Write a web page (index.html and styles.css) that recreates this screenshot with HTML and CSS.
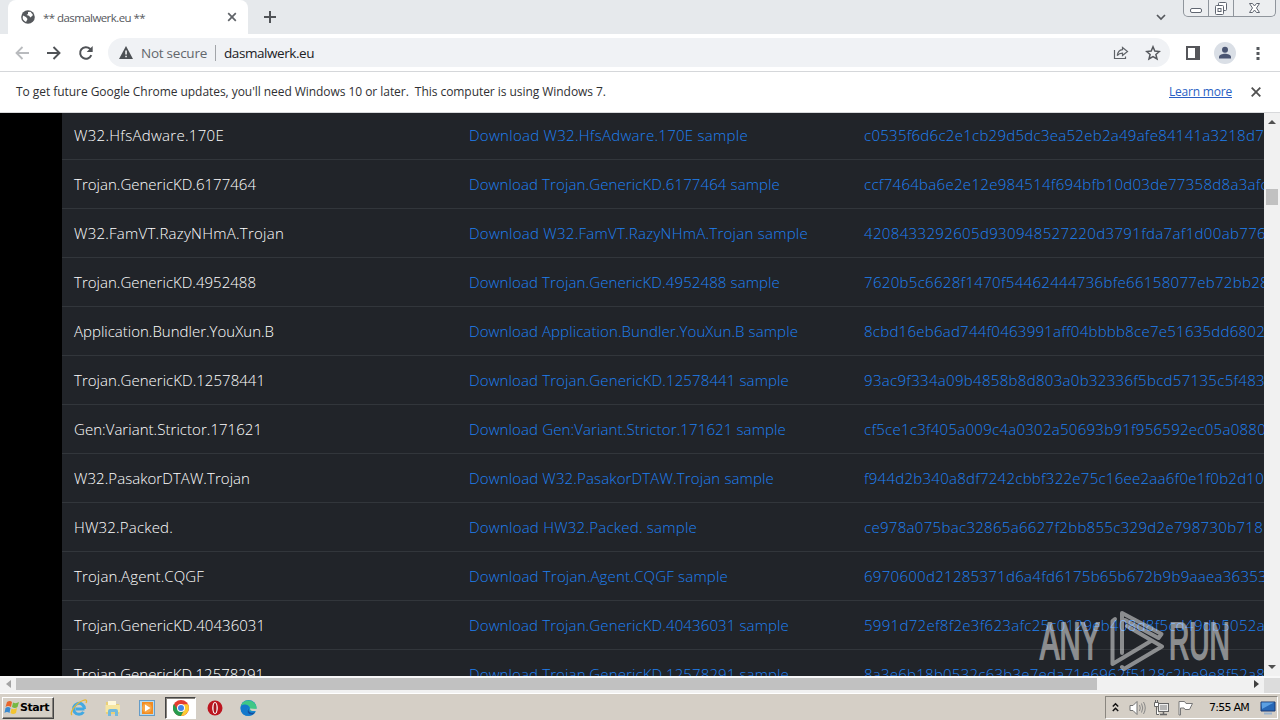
FILE: index.html
```html
<!DOCTYPE html>
<html lang="en">
<head>
<meta charset="utf-8">
<title>** dasmalwerk.eu **</title>
<link rel="stylesheet" href="styles.css">
</head>
<body>
<div class="screen">
  <header class="tabstrip">
    <div class="tab">
      <svg class="globe" width="14" height="14" viewBox="0 0 14 14"><circle cx="7" cy="7" r="6.8" fill="#55585c"/><path d="M2 5.5 L5 7 L6.5 9 L5 12 A5.5 5.5 0 0 1 2 5.500M7 2 L9.500 1.800 L12 5 L9.500 7.500 L8 5.800 L5.500 5 L7 4Z" fill="#fff"/></svg>
      <span class="tab-title" data-w="102">** dasmalwerk.eu **</span>
      <svg class="tab-close" width="10" height="10" viewBox="0 0 10 10"><path d="M1.200 1.200 L8.800 8.800 M8.800 1.200 L1.200 8.800" stroke="#5f6368" stroke-width="1.700"/></svg>
    </div>
    <svg class="newtab" width="12" height="12" viewBox="0 0 12 12"><path d="M6 0 V12 M0 6 H12" stroke="#505357" stroke-width="2"/></svg>
    <div class="spacer"></div>
    <svg class="tabsearch" width="10" height="7" viewBox="0 0 10 7"><path d="M1 1 L5 5 L9 1" fill="none" stroke="#55585d" stroke-width="1.700"/></svg>
    <div class="winbtns">
      <div class="wb w1"><svg width="14" height="16" viewBox="0 0 14 16"><rect x="1.500" y="8.500" width="11" height="4" rx="1.500" fill="#fff" stroke="#606671"/></svg></div>
      <div class="wb w2"><svg width="14" height="16" viewBox="0 0 14 16"><rect x="4.500" y="2.500" width="8" height="8" rx="1" fill="#fff" stroke="#606671"/><rect x="1.500" y="5.500" width="8" height="9" rx="1" fill="#fff" stroke="#606671"/><rect x="4" y="8.500" width="3" height="3" fill="#fff" stroke="#606671"/></svg></div>
      <div class="wb w3"><svg width="13" height="16" viewBox="0 0 13 16"><path d="M1.500 3.500 H4.500 L6.500 6 L8.500 3.500 H11.500 L8.500 8 L11.500 12.500 H8.500 L6.500 10 L4.500 12.500 H1.500 L4.500 8Z" fill="#fff" stroke="#606671"/></svg></div>
    </div>
  </header>

  <div class="toolbar">
    <svg class="back" width="14" height="14" viewBox="0 0 14 14"><path d="M14 7 H1.500 M7.500 1 L1.500 7 L7.500 13" fill="none" stroke="#b9bbbe" stroke-width="1.800"/></svg>
    <svg class="fwd" width="14" height="14" viewBox="0 0 14 14"><path d="M0 7 H12.500 M6.500 1 L12.500 7 L6.500 13" fill="none" stroke="#505357" stroke-width="1.900"/></svg>
    <svg class="reload" width="16" height="16" viewBox="0 0 16 16"><path d="M13.300 10.200 A5.800 5.800 0 1 1 12 3.800 L13.500 5.300" fill="none" stroke="#505357" stroke-width="2"/><path d="M14.700 1 V7 H8.700Z" fill="#505357"/></svg>
    <div class="omnibox">
      <svg class="warn" width="14" height="13" viewBox="0 0 14 13"><path d="M7 0 L14 13 H0Z" fill="#4d5155"/><path d="M6.300 4.500 h1.500 v4 h-1.500z M6.300 9.700 h1.500 v1.500 h-1.500z" fill="#fff"/></svg>
      <span class="notsecure" data-w="66">Not secure</span>
      <span class="divider"></span>
      <span class="url" data-w="90">dasmalwerk.eu</span>
      <div class="spacer"></div>
      <svg class="share" width="16" height="14" viewBox="0 0 16 14"><path d="M1.500 4 V12.500 H12.500 V10.500 M9.500 1.500 L14.500 5.500 L9.500 9.500 V7.200 C7 7.200 5.500 8 4.200 9.700 C4.700 6.500 6 4 9.500 3.700Z" fill="none" stroke="#5f6368" stroke-width="1.200"/></svg>
      <svg class="star" width="16" height="16" viewBox="0 0 16 16"><path d="M8 1.800 L9.800 6.100 L14.400 6.500 L10.900 9.500 L12 14 L8 11.600 L4 14 L5.100 9.500 L1.600 6.500 L6.200 6.100Z" fill="none" stroke="#55585d" stroke-width="1.500"/></svg>
    </div>
    <svg class="panel" width="14" height="14" viewBox="0 0 14 14"><path d="M0 0 H14 V14 H0Z M2 2 V12 H9 V2Z" fill="#55565a" fill-rule="evenodd"/></svg>
    <svg class="avatar" width="22" height="22" viewBox="0 0 22 22"><circle cx="11" cy="11" r="11" fill="#dadfe6"/><circle cx="11" cy="7.800" r="3" fill="#4a5572"/><path d="M5 16.500 V15 C5 12.800 8.500 11.800 11 11.800 S17 12.800 17 15 V16.500Z" fill="#4a5572"/></svg>
    <svg class="dots" width="4" height="14" viewBox="0 0 4 14"><path d="M.5 1h3v3h-3zM.5 6h3v3h-3zM.5 11h3v3h-3z" fill="#55585d"/></svg>
  </div>

  <div class="infobar">
    <span class="info" data-w="590">To get future Google Chrome updates, you'll need Windows 10 or later.&nbsp; This computer is using Windows 7.</span>
    <div class="spacer"></div>
    <a class="learn" data-w="63">Learn more</a>
    <svg class="info-close" width="10" height="10" viewBox="0 0 10 10"><path d="M.7.7 L9.300 9.300 M9.300.7 L.7 9.300" stroke="#505050" stroke-width="1.800"/></svg>
  </div>

  <main class="viewport">
    <div class="page">
      <div class="table">
        <div class="row"><span class="name" data-w="150">W32.HfsAdware.170E</span><a data-w="279">Download W32.HfsAdware.170E sample</a><a data-w="400">c0535f6d6c2e1cb29d5dc3ea52eb2a49afe84141a3218d7</a></div>
        <div class="row"><span class="name" data-w="182">Trojan.GenericKD.6177464</span><a data-w="311">Download Trojan.GenericKD.6177464 sample</a><a data-w="404">ccf7464ba6e2e12e984514f694bfb10d03de77358d8a3afc</a></div>
        <div class="row"><span class="name" data-w="210">W32.FamVT.RazyNHmA.Trojan</span><a data-w="339">Download W32.FamVT.RazyNHmA.Trojan sample</a><a data-w="402">4208433292605d930948527220d3791fda7af1d00ab776</a></div>
        <div class="row"><span class="name" data-w="182">Trojan.GenericKD.4952488</span><a data-w="311">Download Trojan.GenericKD.4952488 sample</a><a data-w="405">7620b5c6628f1470f54462444736bfe66158077eb72bb28</a></div>
        <div class="row"><span class="name" data-w="200">Application.Bundler.YouXun.B</span><a data-w="329">Download Application.Bundler.YouXun.B sample</a><a data-w="401">8cbd16eb6ad744f0463991aff04bbbb8ce7e51635dd6802</a></div>
        <div class="row"><span class="name" data-w="191">Trojan.GenericKD.12578441</span><a data-w="320">Download Trojan.GenericKD.12578441 sample</a><a data-w="401">93ac9f334a09b4858b8d803a0b32336f5bcd57135c5f483</a></div>
        <div class="row"><span class="name" data-w="188">Gen:Variant.Strictor.171621</span><a data-w="317">Download Gen:Variant.Strictor.171621 sample</a><a data-w="402">cf5ce1c3f405a009c4a0302a50693b91f956592ec05a0880</a></div>
        <div class="row"><span class="name" data-w="176">W32.PasakorDTAW.Trojan</span><a data-w="305">Download W32.PasakorDTAW.Trojan sample</a><a data-w="400">f944d2b340a8df7242cbbf322e75c16ee2aa6f0e1f0b2d10</a></div>
        <div class="row"><span class="name" data-w="99">HW32.Packed.</span><a data-w="228">Download HW32.Packed. sample</a><a data-w="399">ce978a075bac32865a6627f2bb855c329d2e798730b718</a></div>
        <div class="row"><span class="name" data-w="130">Trojan.Agent.CQGF</span><a data-w="259">Download Trojan.Agent.CQGF sample</a><a data-w="403">6970600d21285371d6a4fd6175b65b672b9b9aaea36353</a></div>
        <div class="row"><span class="name" data-w="191">Trojan.GenericKD.40436031</span><a data-w="320">Download Trojan.GenericKD.40436031 sample</a><a data-w="401">5991d72ef8f2e3f623afc25c0129eb408d8f5cd49db5052a</a></div>
        <div class="row"><span class="name" data-w="190">Trojan.GenericKD.12578291</span><a data-w="320">Download Trojan.GenericKD.12578291 sample</a><a data-w="401">8a3e6b18b0532c63b3e7eda71e6962f5128c2be9e8f52a8</a></div>
      </div>
    </div>
    <div class="vscroll">
      <svg class="up" width="8" height="4" viewBox="0 0 8 4"><path d="M0 4 L4 0 L8 4Z" fill="#505050"/></svg>
      <div class="vthumb"></div>
      <div class="spacer"></div>
      <svg class="down" width="8" height="4" viewBox="0 0 8 4"><path d="M0 0 H8 L4 4Z" fill="#505050"/></svg>
    </div>
    <div class="watermark">
      <span class="wm any"><b>ANY</b></span>
      <svg class="play" width="56" height="62" viewBox="0 0 56 62"><g fill="none" stroke="#fff" stroke-width="4" stroke-linecap="round" stroke-linejoin="round"><path d="M12 43 V3 L51.500 24 L48.500 28 L15 10"/><path d="M41 31 L2.500 54 V11 L5 9"/><path d="M17 16 L52 36.500 L14 59 L12 57"/></g></svg>
      <span class="wm run"><b>RUN</b></span>
    </div>
  </main>
  <div class="hscroll">
    <svg class="left" width="5" height="8" viewBox="0 0 5 8"><path d="M5 0 V8 L0 4Z" fill="#a3a3a3"/></svg>
    <div class="hthumb"></div>
    <div class="spacer"></div>
    <svg class="right" width="5" height="8" viewBox="0 0 5 8"><path d="M0 0 V8 L5 4Z" fill="#404040"/></svg>
    <div class="corner"></div>
  </div>

  <footer class="taskbar">
    <div class="start">
      <svg width="16" height="15" viewBox="0 0 16 15"><path d="M3 2 Q6 0 8 2 L7 7 Q4 5 1.500 7Z" fill="#e8662c"/><path d="M9 2.500 Q12 4 15 2 L13.500 7 Q11 9 8 7Z" fill="#76b843"/><path d="M1.500 8 Q4 6 6.500 8 L5.500 13 Q3 11 .5 13Z" fill="#3a8ad0"/><path d="M7.500 8.500 Q10 10 13 8 L12 13 Q9 15 6.500 13Z" fill="#f3c431"/></svg>
      <span data-w="29">Start</span>
    </div>
    <div class="quick ie"><svg width="18" height="18" viewBox="0 0 18 18"><path d="M14.500 10 H5.500 M14.500 10 A5.500 5.500 0 1 0 13.500 13" fill="none" stroke="#43a9e2" stroke-width="3"/><path d="M2 16 C-1 14 6 4 13 1.500 C17 0 17 2 16 4" fill="none" stroke="#e7b735" stroke-width="1.300"/></svg></div>
    <div class="quick"><svg width="18" height="18" viewBox="0 0 18 18"><path d="M2 3 H7 L8.500 5 H15 V15 H2Z" fill="#ead078"/><path d="M4 2 H12 V7 H4Z" fill="#fff9dc"/><path d="M1.500 6 H16 V13 H1.500Z" fill="#f6e6a2"/><path d="M4 17 V12 Q4 10 6 10 H12 Q14 10 14 12 V17 H11 V13 H7 V17Z" fill="#73badd"/></svg></div>
    <div class="quick"><svg width="18" height="18" viewBox="0 0 18 18"><rect x="1.500" y="1.500" width="15" height="15" fill="#b8daee" stroke="#659cc7"/><rect x="4" y="3" width="11" height="12" fill="#f28c22"/><circle cx="9" cy="9" r="4.800" fill="#f7a646"/><path d="M7 5.500 L12.500 9 L7 12.500Z" fill="#fff"/></svg></div>
    <div class="quick active"><svg width="16" height="16" viewBox="0 0 16 16"><circle cx="8" cy="8" r="8" fill="#e43d30"/><path d="M1 4 A8 8 0 0 0 8 16 L11.500 9.500 L8 11.500 L4.500 9.500Z" fill="#279c4e"/><path d="M15 4.300 A8 8 0 0 1 8 16 L11.500 9.500 L10.500 4.300Z" fill="#fccb31"/><circle cx="8" cy="8" r="4" fill="#fff"/><circle cx="8" cy="8" r="3" fill="#4285e8"/></svg></div>
    <div class="quick"><svg width="16" height="16" viewBox="0 0 16 16"><ellipse cx="8" cy="8" rx="7.500" ry="7.500" fill="#bd1620"/><ellipse cx="8" cy="8" rx="2.800" ry="6" fill="#fff"/><ellipse cx="8" cy="8" rx="1.500" ry="5" fill="#a9141d"/></svg></div>
    <div class="quick"><svg width="17" height="16" viewBox="0 0 17 16"><circle cx="8.500" cy="8" r="8" fill="#168bd2"/><path d="M1 6 C3-2 16-1 16.500 7.500 C16.500 11 12 12 9.500 10 C12 7 7 3 1 6Z" fill="#40c786"/><path d="M1 6 C5 3 9 5 9 7.500 C5 9 7 14 13 14 C6 19-1 13 1 6Z" fill="#1479cc"/><path d="M9 8 C7 12 12 14 15.500 12 L13 14.500 C8 15 6 11 9 8Z" fill="#164f9d"/><path d="M10 8.500 Q10 11.500 16 11 L17 13 V9Z" fill="#d5cfc6"/></svg></div>
    <div class="spacer"></div>
    <div class="tray">
      <svg class="chev" width="7" height="11" viewBox="0 0 7 11"><path d="M.8 4.500 L3.500 1.800 L6.200 4.500 M.8 9 L3.500 6.300 L6.200 9" fill="none" stroke="#111" stroke-width="1.500"/></svg>
      <svg class="vol" width="17" height="16" viewBox="0 0 17 16"><path d="M1 5.500 H4 L8 1.500 V14.500 L4 10.500 H1Z" fill="#fff" stroke="#737373"/><path d="M10.500 5 Q12 8 10.500 11 M12.500 3.500 Q15 8 12.500 12.500 M14.500 2 Q18 8 14.500 14" fill="none" stroke="#888"/></svg>
      <svg class="net" width="17" height="16" viewBox="0 0 17 16"><rect x="5.500" y="3.500" width="10" height="8" fill="#b5b5b5" stroke="#666"/><rect x="6.500" y="4.500" width="8" height="6" fill="none" stroke="#eee"/><path d="M7 14.500 H14 M10.500 12 V14" stroke="#666" stroke-width="1.500"/><path d="M1.500 2.500 H5.500 V6.500 H1.500Z M3.500 6.500 V14.500 H6" fill="#fff" stroke="#666"/><path d="M2.500 0 V2 M4.500 0 V2" stroke="#666"/></svg>
      <svg class="flag" width="17" height="16" viewBox="0 0 17 16"><path d="M2 1.500 H7.500 L9 3.500 H15.500 L12.500 9.500 H8 L7 8 H3.500 V15 H2Z" fill="#fff" stroke="#777"/></svg>
      <span class="clock" data-w="40">7:55 AM</span>
      <svg class="desktop" width="16" height="14" viewBox="0 0 16 14"><path d="M1 1 H15 V10 H1Z" fill="#2767b6" stroke="#1d3a72"/><path d="M1.500 1.500 H14 L2 8Z" fill="#5b9fe2"/><path d="M4 12.500 H12" stroke="#9ab2cc" stroke-width="2"/></svg>
    </div>
  </footer>
</div>
<script src="fit.js"></script>
</body>
</html>
```
FILE: styles.css
```css
* { box-sizing: border-box; }
body { margin: 0; font-family: "Open Sans", "Noto Sans", sans-serif; overflow: hidden; }
svg { display: block; flex: none; }
[data-w] { white-space: pre; flex: none; }
.screen { width: 1280px; height: 720px; display: flex; flex-direction: column; overflow: hidden; background: #fff; }
.spacer { flex: 1; }

.tabstrip { height: 34px; display: flex; background: #e6e9ec; padding-left: 8px; flex: none; }
.tab { width: 240px; height: 34px; background: #fff; border-radius: 8px 8px 0 0; display: flex; align-items: center; padding: 0 11px 0 13px; }
.tab-title { font-size: 11.5px; color: #55585d; margin-left: 8px; flex: 1; }
.newtab { margin: 11px 0 0 16px; }
.tabsearch { margin: 14px 17px 0 0; }
.winbtns { display: flex; width: 93px; height: 17px; border: 1px solid #8f959c; border-top: 0; border-radius: 0 0 5px 5px; margin-right: 4px; background: #eceef0; }
.wb { display: flex; justify-content: center; border-right: 1px solid #8f959c; }
.w1 { width: 25px; }
.w2 { width: 25px; }
.w3 { flex: 1; border: 0; }

.toolbar { height: 38px; border-bottom: 1px solid #d5d7da; display: flex; align-items: center; padding: 0 20px 0 15px; flex: none; }
.fwd { margin-left: 18px; }
.reload { margin-left: 17px; }
.omnibox { width: 1064px; height: 29px; margin-left: 14px; border-radius: 15px; background: #f0f2f5; display: flex; align-items: center; padding: 0 9px 0 11px; }
.notsecure { font-size: 13.5px; color: #63676c; margin-left: 8px; }
.divider { width: 1px; height: 16px; background: #a2a5a9; margin: 0 8px; }
.url { font-size: 13.5px; color: #202124; }
.star { margin-left: 16px; }
.panel { margin-left: 16px; }
.avatar { margin-left: 14px; }
.dots { margin-left: 20px; }

.infobar { height: 41px; display: flex; align-items: center; padding: 0 19px 1px 16px; border-bottom: 1px solid #d8d9db; flex: none; }
.info { font-size: 12px; color: #2f3033; }
.learn { font-size: 12px; color: #2a5fc4; text-decoration: underline; }
.info-close { margin-left: 19px; }

.viewport { height: 563px; display: flex; position: relative; overflow: hidden; flex: none; }
.page { width: 1264px; background: #000; padding-left: 62px; overflow: hidden; }
.table { margin-top: -2px; background: #212429; }
.row { height: 49px; border-bottom: 1px solid #32363b; display: grid; grid-template-columns: 395px 395px 1fr; padding-left: 12px; align-items: center; font: 300 15px/23px "Open Sans", "Noto Sans", sans-serif; color: #1f80f2; }
.row .name { color: #fff; }
.row > * { justify-self: start; }
.vscroll { width: 16px; background: #f1f1f1; display: flex; flex-direction: column; align-items: center; }
.up { margin-top: 7px; }
.vthumb { width: 12px; height: 16px; background: #c1c1c1; margin-top: 65px; }
.down { margin-bottom: 7px; }

.watermark { position: absolute; left: 1040px; top: 497px; width: 196px; height: 62px; opacity: .48; display: flex; color: #fff; }
.wm { display: block; height: 62px; font: 400 51px/62px "Liberation Sans", sans-serif; }
.wm b { display: block; font-weight: 400; transform-origin: 0 50%; padding-top: 1px; -webkit-text-stroke: 2px #fff; }
.any { width: 70px; }
.any b { width: 110px; transform: scaleX(.57); }
.run { width: 64px; margin-left: 3px; }
.run b { width: 110px; transform: scaleX(.55); }

.hscroll { height: 17px; background: #f1f1f1; display: flex; align-items: center; flex: none; border-top: 2px solid #f8f8f8; }
.left { margin: 0 5px 0 6px; }
.hthumb { width: 1081px; height: 12px; background: #c1c1c1; margin-bottom: 3px; }
.left, .right { margin-bottom: 3px; }
.right { margin-right: 5px; }
.corner { width: 16px; height: 15px; background: #dcdcdc; }

.taskbar { height: 27px; background: #d5cfc6; border-top: 1px solid #fff; display: flex; padding: 2px 2px 1px; align-items: center; flex: none; }
.start { width: 52px; height: 22px; border: 1px solid; border-color: #fff #444 #444 #fff; box-shadow: inset -1px -1px #86827c; display: flex; align-items: center; gap: 0; padding-left: 1px; font: 700 11px/20px "DejaVu Sans", sans-serif; color: #000; }
.quick { width: 31px; height: 22px; margin-right: 3px; display: flex; align-items: center; justify-content: center; }
.ie { margin-left: 9px; }
.active { background: #fff; border: 1px solid; border-color: #444 #fff #fff #444; box-shadow: inset 1px 1px #86827c; }
.tray { width: 173px; height: 23px; border: 1px solid; border-color: #8a867f #fff #fff #8a867f; display: flex; align-items: center; padding-left: 6px; }
.vol { margin-left: 10px; }
.net { margin-left: 7px; }
.flag { margin-left: 7px; }
.clock { font: 11px/20px "DejaVu Sans", sans-serif; margin-left: 15px; color: #000; }
.desktop { margin-left: 11px; }
```
FILE: fit.js
```javascript
document.querySelectorAll("[data-w]").forEach(function (el) {
  var range = document.createRange();
  range.selectNodeContents(el);
  var natural = range.getBoundingClientRect().width;
  var gap = (Number(el.dataset.w) - natural) / el.textContent.length;
  el.style.letterSpacing = gap.toFixed(3) + "px";
});
```
